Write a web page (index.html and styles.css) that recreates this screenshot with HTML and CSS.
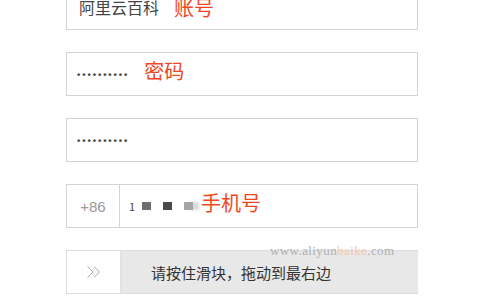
FILE: index.html
```html
<!DOCTYPE html>
<html lang="zh-cn">
<head>
  <meta charset="UTF-8">
  <title>登录</title>
  <link rel="stylesheet" href="styles.css">
</head>
<body>
  <div class="form">
    <div class="field">
      <span class="val">阿里云百科</span>
      <span class="tag tag-top">账号</span>
    </div>
    <div class="field">
      <span class="dots">••••••••••</span>
      <span class="tag">密码</span>
    </div>
    <div class="field">
      <span class="dots">••••••••••</span>
    </div>
    <div class="field phone">
      <span class="code">+86</span>
      <div class="num">
        <span class="digit">1</span>
        <span class="mask m1"></span>
        <span class="mask m2"></span>
        <span class="mask m3"></span>
        <span class="tag">手机号</span>
      </div>
    </div>
    <div class="slider">
      <div class="handle">
        <svg width="16" height="14" viewBox="0 0 16 14">
          <path d="M1.5 1.5 L7 7 L1.5 12.5 M8 1.5 L13.5 7 L8 12.5" fill="none" stroke="#aaa" stroke-width="1"/>
        </svg>
      </div>
      <div class="track">
        <span class="mark">www.aliyun<span class="mark-hl">baike</span>.com</span>
        请按住滑块，拖动到最右边
      </div>
    </div>
  </div>
</body>
</html>
```

FILE: styles.css
```css
body {
  margin: 0;
  background: #fff;
  font-family: 'Noto Sans CJK SC', 'Liberation Sans', sans-serif;
  color: #333;
}
.form {
  width: 352px;
  margin: -14px 0 0 66px;
}
.field {
  box-sizing: border-box;
  height: 44px;
  border: 1px solid #d4d4d4;
  margin-bottom: 22px;
  display: flex;
  align-items: center;
  padding-left: 12px;
}
.val {
  font-size: 16px;
  color: #444;
  margin-bottom: 2px;
}
.tag {
  font-size: 20px;
  color: #f0461e;
  margin-left: 15px;
  margin-bottom: 8px;
}
.tag-top {
  margin-bottom: 2px;
}
.dots {
  font-family: 'Liberation Sans', sans-serif;
  font-size: 9.5px;
  font-weight: bold;
  letter-spacing: 1.9px;
  color: #444;
  margin-left: -2px;
}
.phone {
  padding-left: 0;
}
.code {
  width: 52px;
  height: 100%;
  border-right: 1px solid #d4d4d4;
  display: flex;
  align-items: center;
  justify-content: center;
  font-family: 'Liberation Sans', sans-serif;
  font-size: 15px;
  color: #999;
}
.num {
  display: flex;
  align-items: center;
  padding-left: 9px;
}
.digit {
  font-size: 11px;
  color: #444;
  margin-right: 7px;
}
.mask {
  width: 9px;
  height: 8px;
  margin-right: 12px;
}
.m1 { background: #6e6e70; }
.m2 { background: #48494b; }
.m3 { background: #a4a5a6; margin-right: 0; box-shadow: 6px 0 3px #d8d8d8; }
.phone .tag {
  margin-left: 8px;
}
.slider {
  box-sizing: border-box;
  height: 44px;
  display: flex;
  border: 1px solid #ddd;
  border-right: none;
  background: #e8e8e8;
}
.handle {
  width: 53px;
  background: #fff;
  display: flex;
  align-items: center;
  justify-content: center;
  box-shadow: 1px 0 2px #ddd;
}
.track {
  flex: 1;
  position: relative;
  display: flex;
  align-items: center;
  padding-left: 31px;
  padding-top: 1px;
  font-size: 15px;
  color: #333;
}
.mark {
  position: absolute;
  top: -8px;
  left: 150px;
  font-family: 'Liberation Serif', serif;
  font-size: 13px;
  letter-spacing: 0.4px;
  color: #b0b0b0;
}
.mark-hl {
  color: #f2c9a8;
}
```
